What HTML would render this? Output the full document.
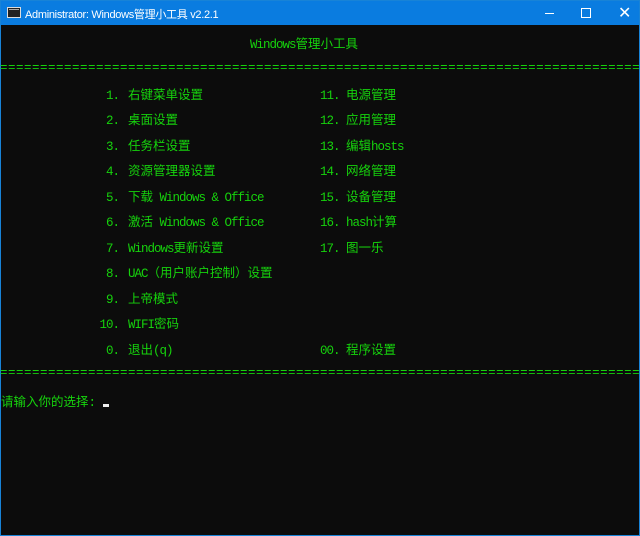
<!DOCTYPE html>
<html><head><meta charset="utf-8"><style>
html,body{margin:0;padding:0;width:640px;height:536px;overflow:hidden;background:#0c0c0c}
.win{position:absolute;left:0;top:0;width:638px;height:534px;border:1px solid #1883d7;background:#0c0c0c}
.tb{position:absolute;left:0;top:0;width:638px;height:24px;background:#0a7ce0;color:#fff;font:11px "Liberation Sans","Noto Sans CJK SC",sans-serif;letter-spacing:-0.3px}
.tb .t{position:absolute;left:24px;top:5px}
.ic{position:absolute;left:6px;top:6px;width:14px;height:11px;background:#222;border:1px solid #ddd;box-sizing:border-box}
.ic:after{content:"";position:absolute;left:1px;top:1px;width:10px;height:1px;background:#aaa}
.g{position:absolute;color:#16d20c;font:12.5px "Liberation Mono","Noto Sans CJK SC",monospace;letter-spacing:-1px;white-space:pre;line-height:16px}
.g b{font-weight:normal;font-size:12.5px;letter-spacing:0}
.eq{left:0;letter-spacing:0.5px}
.r{text-align:right;width:30px}
</style></head><body>
<div class="win">
<div class="tb"><div class="ic"></div><span class="t">Administrator:  Windows管理小工具 v2.2.1</span>
<div style="position:absolute;left:544px;top:12px;width:9px;height:1px;background:#fff"></div>
<div style="position:absolute;left:580px;top:7px;width:8px;height:8px;border:1px solid #fff"></div>
<div style="position:absolute;left:617px;top:2px;color:#fff;font-size:16px">✕</div>
</div>
</div>
<div class="g" style="left:250px;top:37px">Windows<b>管理小工具</b></div>
<div class="g eq" style="top:60px">================================================================================</div>
<div class="g eq" style="top:365px">================================================================================</div>

<div class="g r" style="left:89px;top:88px">1.</div><div class="g" style="left:128px;top:88px"><b>右键菜单设置</b></div>
<div class="g r" style="left:89px;top:113px">2.</div><div class="g" style="left:128px;top:113px"><b>桌面设置</b></div>
<div class="g r" style="left:89px;top:139px">3.</div><div class="g" style="left:128px;top:139px"><b>任务栏设置</b></div>
<div class="g r" style="left:89px;top:164px">4.</div><div class="g" style="left:128px;top:164px"><b>资源管理器设置</b></div>
<div class="g r" style="left:89px;top:190px">5.</div><div class="g" style="left:128px;top:190px"><b>下载</b> Windows &amp; Office</div>
<div class="g r" style="left:89px;top:215px">6.</div><div class="g" style="left:128px;top:215px"><b>激活</b> Windows &amp; Office</div>
<div class="g r" style="left:89px;top:241px">7.</div><div class="g" style="left:128px;top:241px">Windows<b>更新设置</b></div>
<div class="g r" style="left:89px;top:266px">8.</div><div class="g" style="left:128px;top:266px">UAC<b>（用户账户控制）设置</b></div>
<div class="g r" style="left:89px;top:292px">9.</div><div class="g" style="left:128px;top:292px"><b>上帝模式</b></div>
<div class="g r" style="left:89px;top:317px">10.</div><div class="g" style="left:128px;top:317px">WIFI<b>密码</b></div>
<div class="g r" style="left:89px;top:343px">0.</div><div class="g" style="left:128px;top:343px"><b>退出</b>(q)</div>

<div class="g" style="left:320px;top:88px">11. <b>电源管理</b></div>
<div class="g" style="left:320px;top:113px">12. <b>应用管理</b></div>
<div class="g" style="left:320px;top:139px">13. <b>编辑</b>hosts</div>
<div class="g" style="left:320px;top:164px">14. <b>网络管理</b></div>
<div class="g" style="left:320px;top:190px">15. <b>设备管理</b></div>
<div class="g" style="left:320px;top:215px">16. hash<b>计算</b></div>
<div class="g" style="left:320px;top:241px">17. <b>图一乐</b></div>
<div class="g" style="left:320px;top:343px">00. <b>程序设置</b></div>

<div class="g" style="left:1px;top:395px"><b>请输入你的选择</b>: </div>
<div style="position:absolute;left:103px;top:404px;width:6px;height:3px;background:#eee"></div>
</body></html>
